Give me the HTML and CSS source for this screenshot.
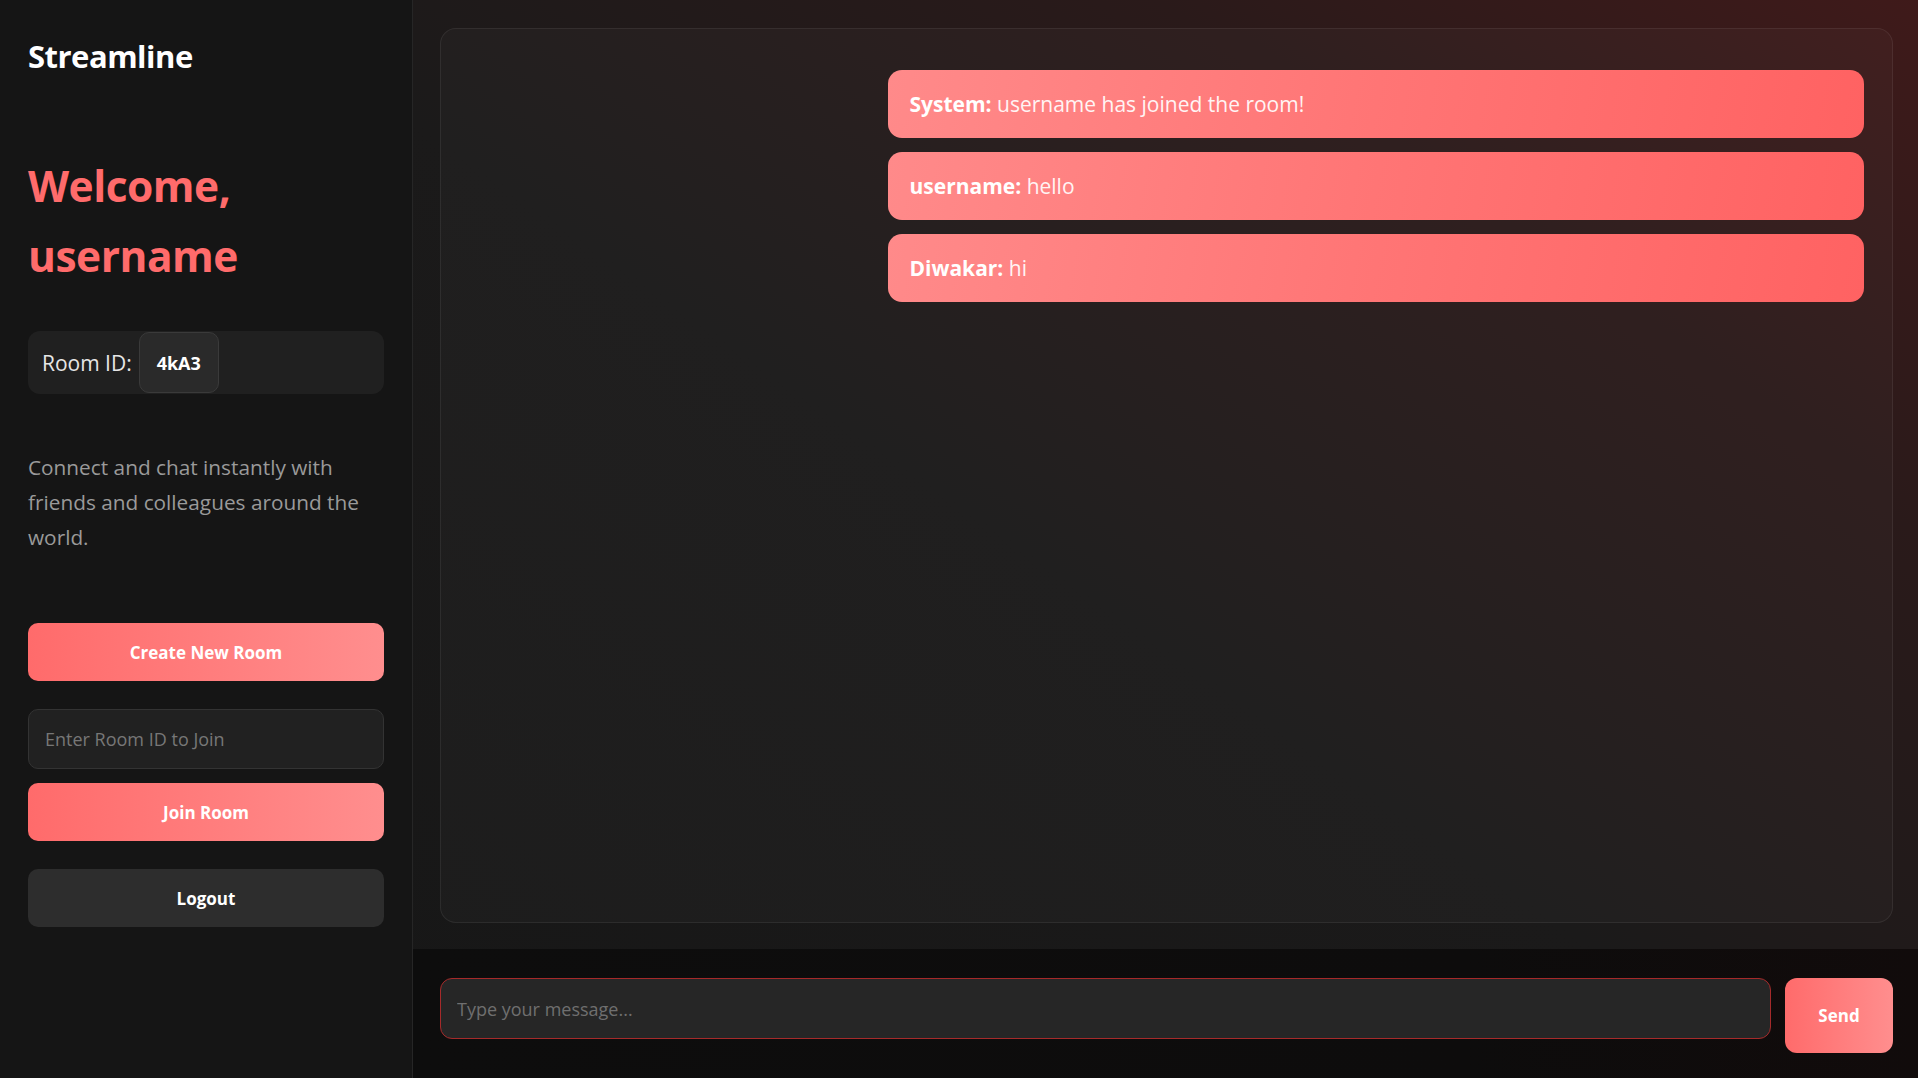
FILE: index.html
```html
<!DOCTYPE html>
<html lang="en">
<head>
<meta charset="utf-8">
<title>Streamline</title>
<link rel="stylesheet" href="styles.css">
</head>
<body>
<div class="app">
  <aside class="sidebar">
    <h1 class="brand">Streamline</h1>
    <h2 class="welcome">Welcome,<br>username</h2>
    <div class="room-box">
      <span class="room-label">Room ID:</span>
      <span class="room-code">4kA3</span>
    </div>
    <p class="desc">Connect and chat instantly with friends and colleagues around the world.</p>
    <div class="actions">
      <button class="btn btn-primary btn-create">Create New Room</button>
      <input class="room-input" type="text" placeholder="Enter Room ID to Join">
      <button class="btn btn-primary btn-join">Join Room</button>
      <button class="btn btn-dark btn-logout">Logout</button>
    </div>
  </aside>
  <main class="main">
    <section class="chat-wrap">
      <div class="chat-box">
        <div class="msg"><strong>System:</strong> username has joined the room!</div>
        <div class="msg"><strong>username:</strong> hello</div>
        <div class="msg"><strong>Diwakar:</strong> hi</div>
      </div>
    </section>
    <footer class="composer">
      <input class="msg-input" type="text" placeholder="Type your message...">
      <button class="send-btn">Send</button>
    </footer>
  </main>
</div>
</body>
</html>
```
FILE: styles.css
```css
* { box-sizing: border-box; }
html, body { margin: 0; padding: 0; height: 100%; }
body {
  font-family: "Open Sans", "Noto Sans", sans-serif;
  background: #141414;
  color: #fff;
}
.app {
  display: flex;
  height: 100vh;
  overflow: hidden;
}
.sidebar {
  width: 413px;
  flex: 0 0 413px;
  background: #151515;
  border-right: 1px solid #262626;
  padding: 28px 28px;
  display: flex;
  flex-direction: column;
}
.brand {
  margin: 0;
  font-size: 31px;
  font-weight: 700;
  line-height: 58px;
  margin-top: -1px;
  letter-spacing: -0.5px;
  color: #fff;
}
.welcome {
  margin: 66px 0 0;
  font-size: 42.5px;
  line-height: 70px;
  font-weight: 700;
  color: #ff6b6b;
  letter-spacing: -0.5px;
}
.room-box {
  margin-top: 40px;
  height: 63px;
  background: #202020;
  border-radius: 12px;
  display: flex;
  align-items: center;
  padding: 0 0 0 14px;
  gap: 7px;
}
.room-label {
  font-size: 21px;
  color: #e6e6e6;
}
.room-code {
  display: flex;
  align-items: center;
  justify-content: center;
  width: 80px;
  height: 61px;
  background: #2a2a2a;
  border: 1px solid #3a3a3a;
  border-radius: 10px;
  font-weight: 700;
  font-size: 18px;
  color: #fff;
}
.desc {
  margin: 56px 0 0;
  font-size: 20.8px;
  line-height: 35px;
  color: #9a9a9a;
}
.actions {
  margin-top: 68px;
  display: flex;
  flex-direction: column;
}
.btn {
  height: 58px;
  border: none;
  border-radius: 10px;
  font-family: inherit;
  font-weight: 700;
  font-size: 17px;
  color: #fff;
  cursor: pointer;
}
.btn-primary {
  background: linear-gradient(90deg, #ff6b6b, #ff8e8e);
}
.btn-dark {
  background: #2d2d2d;
}
.room-input {
  margin-top: 28px;
  height: 60px;
  background: #212121;
  border: 1px solid #333;
  border-radius: 10px;
  padding: 0 16px;
  font-family: inherit;
  font-size: 18px;
  color: #fff;
  outline: none;
}
.room-input::placeholder { color: #777; }
.btn-join { margin-top: 14px; }
.btn-logout { margin-top: 28px; }

.main {
  flex: 1;
  display: flex;
  flex-direction: column;
  background: linear-gradient(215deg, #3f1a1a 0%, #2a1a1a 25%, #1b1a1a 55%, #171717 100%);
}
.chat-wrap {
  flex: 1;
  padding: 28px 25px 26px 27px;
  display: flex;
}
.chat-box {
  flex: 1;
  border: 1px solid rgba(255,255,255,0.07);
  border-radius: 16px;
  background: rgba(255,255,255,0.025);
  padding: 41px 28px 28px;
  display: flex;
  flex-direction: column;
  align-items: flex-end;
  gap: 14px;
}
.msg {
  width: 70%;
  min-height: 68px;
  display: flex;
  align-items: center;
  padding: 0 22px;
  border-radius: 14px;
  background: linear-gradient(100deg, #ff8a8a 0%, #ff7575 50%, #ff6262 100%);
  font-size: 21px;
  color: #fff4f4;
  white-space: pre;
}
.msg strong { color: #fff; font-weight: 700; }
.composer {
  flex: 0 0 129px;
  background: linear-gradient(90deg, #0d0d0d 0%, #0d0c0c 70%, #110b0b 100%);
  padding: 29px 25px 25px 27px;
  display: flex;
  align-items: flex-start;
  gap: 14px;
}
.msg-input {
  flex: 1;
  height: 61px;
  background: #262626;
  border: 1px solid #a52a2a;
  border-radius: 12px;
  padding: 0 16px;
  font-family: inherit;
  font-size: 18px;
  color: #fff;
  outline: none;
}
.msg-input::placeholder { color: #6f6f6f; }
.send-btn {
  width: 108px;
  height: 75px;
  border: none;
  border-radius: 12px;
  background: linear-gradient(90deg, #ff6b6b, #ff8e8e);
  font-family: inherit;
  font-weight: 700;
  font-size: 17px;
  color: #fff;
}
```
